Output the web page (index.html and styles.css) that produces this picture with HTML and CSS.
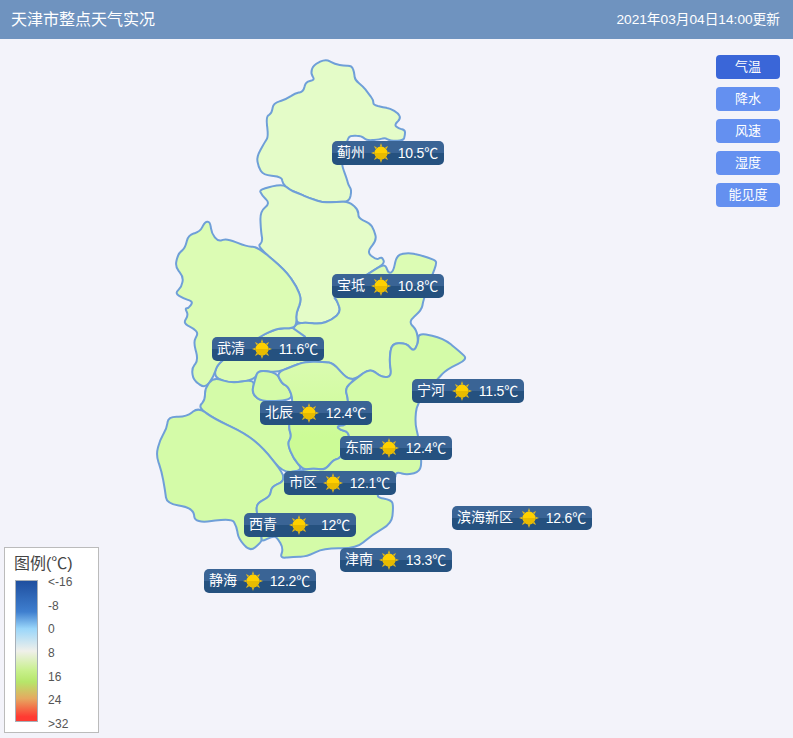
FILE: index.html
```html
<!DOCTYPE html>
<html lang="zh-CN">
<head>
<meta charset="utf-8">
<title>天津市整点天气实况</title>
<link rel="stylesheet" href="styles.css">
</head>
<body>
<header class="top">
  <h1 class="title">天津市整点天气实况</h1>
  <div class="time">2021年03月04日14:00更新</div>
</header>
<main class="stage">
  <svg class="map" viewBox="0 0 990 1650" aria-hidden="true">
    <defs>
      <linearGradient id="dong" x1="0" y1="0" x2="0" y2="1">
        <stop offset="0" stop-color="#dafbb0"/>
        <stop offset="0.7" stop-color="#ccfb96"/>
      </linearGradient>
    </defs>
    <polygon class="c1" points="527,27 555,42 580,47 605,47 612,65 615,90 640,110 655,130 670,150 670,165 700,172 720,175 745,190 752,205 733,225 745,235 765,240 765,255 760,272 720,272 705,263 690,268 650,272 635,258 600,257 592,270 580,320 575,345 590,385 595,405 605,420 598,455 560,455 520,458 480,445 440,428 420,420 398,402 395,380 340,375 325,350 320,320 345,275 355,260 348,200 365,190 370,160 410,147 435,130 460,125 467,95 495,90 482,70 490,45"/>
    <polygon class="c1" points="398,402 420,420 440,428 480,445 520,458 560,455 598,455 625,480 625,505 660,520 672,540 680,570 650,607 680,630 695,620 705,640 665,665 550,740 560,750 573,785 545,810 510,822 470,818 440,820 438,790 455,750 440,710 405,660 322,590 338,575 333,545 330,485 360,460 335,435 328,418"/>
    <polygon class="c2" points="705,640 715,670 730,665 740,615 775,608 810,615 855,630 860,640 845,680 820,750 815,780 775,815 800,840 805,880 790,905 770,880 725,880 718,930 725,980 695,982 660,955 615,988 590,985 550,940 520,935 465,935 430,948 380,968 325,960 315,988 245,1000 190,982 205,935 330,860 380,835 430,835 440,820 470,818 510,822 545,810 573,785 560,750 550,740 665,665"/>
    <polygon class="c2" points="322,590 290,590 230,565 205,575 185,550 180,515 165,515 150,545 115,555 105,595 85,610 75,650 100,680 95,710 75,730 100,745 130,755 115,775 105,775 115,795 100,820 130,835 145,850 130,875 145,930 125,955 130,990 165,1015 190,982 205,935 330,860 380,835 430,835 440,820 438,790 455,750 440,710 405,660"/>
    <polygon class="c3" points="190,982 245,1000 315,988 305,1030 335,1055 430,1050 415,1130 425,1160 412,1180 430,1225 460,1260 400,1270 340,1195 285,1150 190,1105 145,1072 165,1050 165,1015"/>
    <polygon class="c3" points="325,960 380,968 395,1000 415,1010 430,1050 335,1055 305,1030 315,988"/>
    <polygon class="c3" points="145,1072 110,1100 55,1100 50,1135 30,1170 18,1215 35,1265 45,1320 50,1360 130,1375 135,1420 245,1405 260,1430 265,1465 300,1505 335,1475 335,1460 320,1390 320,1360 360,1340 365,1310 400,1295 400,1270 340,1195 285,1150 190,1105"/>
    <polygon class="c4" points="465,935 520,935 550,940 590,985 615,988 585,1015 595,1050 595,1125 560,1128 570,1140 595,1145 600,1180 570,1225 550,1230 525,1260 490,1255 460,1260 430,1225 412,1180 425,1160 415,1130 430,1050 415,1010 395,1000 380,968 430,948"/>
    <polygon class="c3" points="805,848 880,865 930,905 953,928 890,958 860,990 800,1060 795,1120 805,1160 815,1230 810,1265 770,1275 738,1265 735,1290 670,1340 725,1350 730,1370 725,1420 665,1455 620,1495 520,1495 470,1520 430,1520 390,1525 400,1495 380,1460 365,1460 335,1475 335,1460 320,1390 320,1360 360,1340 365,1310 400,1295 400,1270 460,1260 490,1255 525,1260 550,1230 570,1225 600,1180 595,1145 570,1140 560,1128 595,1125 595,1050 585,1015 615,988 660,955 695,982 725,980 718,930 725,880 770,880 790,905 805,880"/>
    <polyline class="line" points="430,835 465,860"/>
  </svg>

  <svg class="defs" aria-hidden="true">
    <symbol id="sun" viewBox="0 0 20 20">
      <g class="rays">
        <polygon points="10,0 11.2,3.4 8.8,3.4"/>
        <polygon points="10,20 11.2,16.6 8.8,16.6"/>
        <polygon points="0,10 3.4,8.8 3.4,11.2"/>
        <polygon points="20,10 16.6,8.8 16.6,11.2"/>
        <polygon points="3,3 6,4.4 4.4,6"/>
        <polygon points="17,3 14,4.4 15.6,6"/>
        <polygon points="3,17 6,15.6 4.4,14"/>
        <polygon points="17,17 14,15.6 15.6,14"/>
      </g>
      <circle class="disc" cx="10" cy="10" r="6.5"/>
      <path class="shade" d="M3.5 10a6.5 6.5 0 0 0 13 0z"/>
    </symbol>
  </svg>

  <div class="pin" style="left:332px;top:102px"><span class="name">蓟州</span><svg class="sun"><use href="#sun"/></svg><span class="temp">10.5℃</span></div>
  <div class="pin" style="left:332px;top:235px"><span class="name">宝坻</span><svg class="sun"><use href="#sun"/></svg><span class="temp">10.8℃</span></div>
  <div class="pin" style="left:212px;top:298px"><span class="name">武清</span><svg class="sun"><use href="#sun"/></svg><span class="temp">11.6℃</span></div>
  <div class="pin" style="left:412px;top:340px"><span class="name">宁河</span><svg class="sun"><use href="#sun"/></svg><span class="temp">11.5℃</span></div>
  <div class="pin" style="left:260px;top:362px"><span class="name">北辰</span><svg class="sun"><use href="#sun"/></svg><span class="temp">12.4℃</span></div>
  <div class="pin" style="left:340px;top:397px"><span class="name">东丽</span><svg class="sun"><use href="#sun"/></svg><span class="temp">12.4℃</span></div>
  <div class="pin" style="left:284px;top:432px"><span class="name">市区</span><svg class="sun"><use href="#sun"/></svg><span class="temp">12.1℃</span></div>
  <div class="pin" style="left:244px;top:474px"><span class="name">西青</span><svg class="sun"><use href="#sun"/></svg><span class="temp">12℃</span></div>
  <div class="pin wide" style="left:452px;top:467px"><span class="name">滨海新区</span><svg class="sun"><use href="#sun"/></svg><span class="temp">12.6℃</span></div>
  <div class="pin" style="left:340px;top:509px"><span class="name">津南</span><svg class="sun"><use href="#sun"/></svg><span class="temp">13.3℃</span></div>
  <div class="pin" style="left:204px;top:530px"><span class="name">静海</span><svg class="sun"><use href="#sun"/></svg><span class="temp">12.2℃</span></div>

  <nav class="tabs">
    <button class="tab active">气温</button>
    <button class="tab">降水</button>
    <button class="tab">风速</button>
    <button class="tab">湿度</button>
    <button class="tab">能见度</button>
  </nav>

  <aside class="legend">
    <div class="legend-title">图例(℃)</div>
    <div class="legend-body">
      <div class="ramp"></div>
      <ul class="ticks">
        <li>&lt;-16</li><li>-8</li><li>0</li><li>8</li><li>16</li><li>24</li><li>&gt;32</li>
      </ul>
    </div>
  </aside>
</main>
<script src="map.js"></script>
</body>
</html>
```

FILE: styles.css
```css
html, body {
  margin: 0;
  height: 100%;
  overflow: hidden;
}
body {
  background: #f3f3fa;
  font-family: "Liberation Sans", "Noto Sans CJK SC", sans-serif;
  color: #fff;
}
.top {
  height: 39px;
  box-sizing: border-box;
  background: #6f93bf;
  display: flex;
  align-items: center;
  justify-content: space-between;
  padding: 0 13px 3px 11px;
}
.title {
  margin: 0;
  font-size: 16px;
  font-weight: 400;
}
.time {
  font-size: 13.7px;
}
.stage {
  position: relative;
  height: 699px;
}
.map {
  position: absolute;
  left: 150px;
  top: 11px;
  width: 330px;
  height: 550px;
}
.map polygon, .map path, .map .line {
  stroke: #6f9fd8;
  stroke-width: 6;
  stroke-linejoin: round;
  stroke-linecap: round;
  fill: none;
}
.map .c1 { fill: #e4fcc8; }
.map .c2 { fill: #dcfcb4; }
.map .c3 { fill: #d4fba8; }
.map .c4 { fill: url(#dong); }
.defs {
  position: absolute;
  width: 0;
  height: 0;
}
.pin {
  position: absolute;
  width: 112px;
  height: 24px;
  box-sizing: border-box;
  padding: 0 6px 0 5px;
  border-radius: 5px;
  background: linear-gradient(#3a6495 0, #3a6495 50%, #25517f 50%, #25517f 100%);
  display: flex;
  align-items: center;
  justify-content: space-between;
  font-size: 14px;
  white-space: nowrap;
}
.pin.wide { width: 140px; }
.name {
  font-size: 14px;
  position: relative;
  top: -2px;
}
.temp {
  font-size: 14px;
  letter-spacing: -0.2px;
  position: relative;
  top: -1px;
}
.sun {
  width: 20px;
  height: 20px;
  flex: none;
}
.rays polygon { fill: #e6bb1a; }
.disc { fill: #ffd000; }
.shade { fill: #e8bb00; }
.tabs {
  position: absolute;
  left: 716px;
  top: 16px;
  display: flex;
  flex-direction: column;
  gap: 8px;
}
.tab {
  width: 64px;
  height: 24px;
  padding: 0 0 3px;
  border: 0;
  border-radius: 4px;
  background: #6490f0;
  color: #fff;
  font: 13px "Liberation Sans", "Noto Sans CJK SC", sans-serif;
}
.tab.active { background: #3a66d8; }
.legend {
  position: absolute;
  left: 4px;
  top: 508px;
  width: 95px;
  height: 186px;
  box-sizing: border-box;
  border: 1px solid #bbbbbb;
  background: #fff;
  color: #444;
  padding: 6px 0 0 9px;
}
.legend-title {
  font-size: 16px;
  line-height: 20px;
  color: #444;
}
.legend-body {
  display: flex;
  margin: 6px 0 0 1px;
  gap: 10px;
}
.ramp {
  width: 23px;
  height: 142px;
  box-sizing: border-box;
  border: 1px solid #a8b0b8;
  background: linear-gradient(#1f4f9f 0%, #3f7fcf 22%, #9ad6fa 34%, #f0f0ea 50%, #c8f08c 64%, #b6e66a 72%, #e6a860 84%, #ff3a32 97%);
}
.ticks {
  list-style: none;
  margin: -5px 0 0;
  padding: 0;
  display: flex;
  flex-direction: column;
  justify-content: space-between;
  font-size: 12px;
  line-height: 14px;
  height: 156px;
  color: #555;
}
```

FILE: map.js
```js
// Rounds the corners of the hand-traced district outlines.
var NS = 'http://www.w3.org/2000/svg';
document.querySelectorAll('.map polygon').forEach(function (poly) {
  var p = poly.getAttribute('points').trim().split(/\s+/).map(function (s) {
    return s.split(',').map(Number);
  });
  var n = p.length, d = '';
  var mix = function (a, b, t) {
    return (a[0] + (b[0] - a[0]) * t).toFixed(1) + ' ' + (a[1] + (b[1] - a[1]) * t).toFixed(1);
  };
  for (var i = 0; i < n; i++) {
    var cur = p[i], prev = p[(i + n - 1) % n], next = p[(i + 1) % n];
    d += (i ? 'L' : 'M') + mix(cur, prev, 0.45) + 'Q' + cur[0] + ' ' + cur[1] + ' ' + mix(cur, next, 0.45);
  }
  var path = document.createElementNS(NS, 'path');
  path.setAttribute('class', poly.getAttribute('class'));
  path.setAttribute('d', d + 'Z');
  poly.replaceWith(path);
});
```
